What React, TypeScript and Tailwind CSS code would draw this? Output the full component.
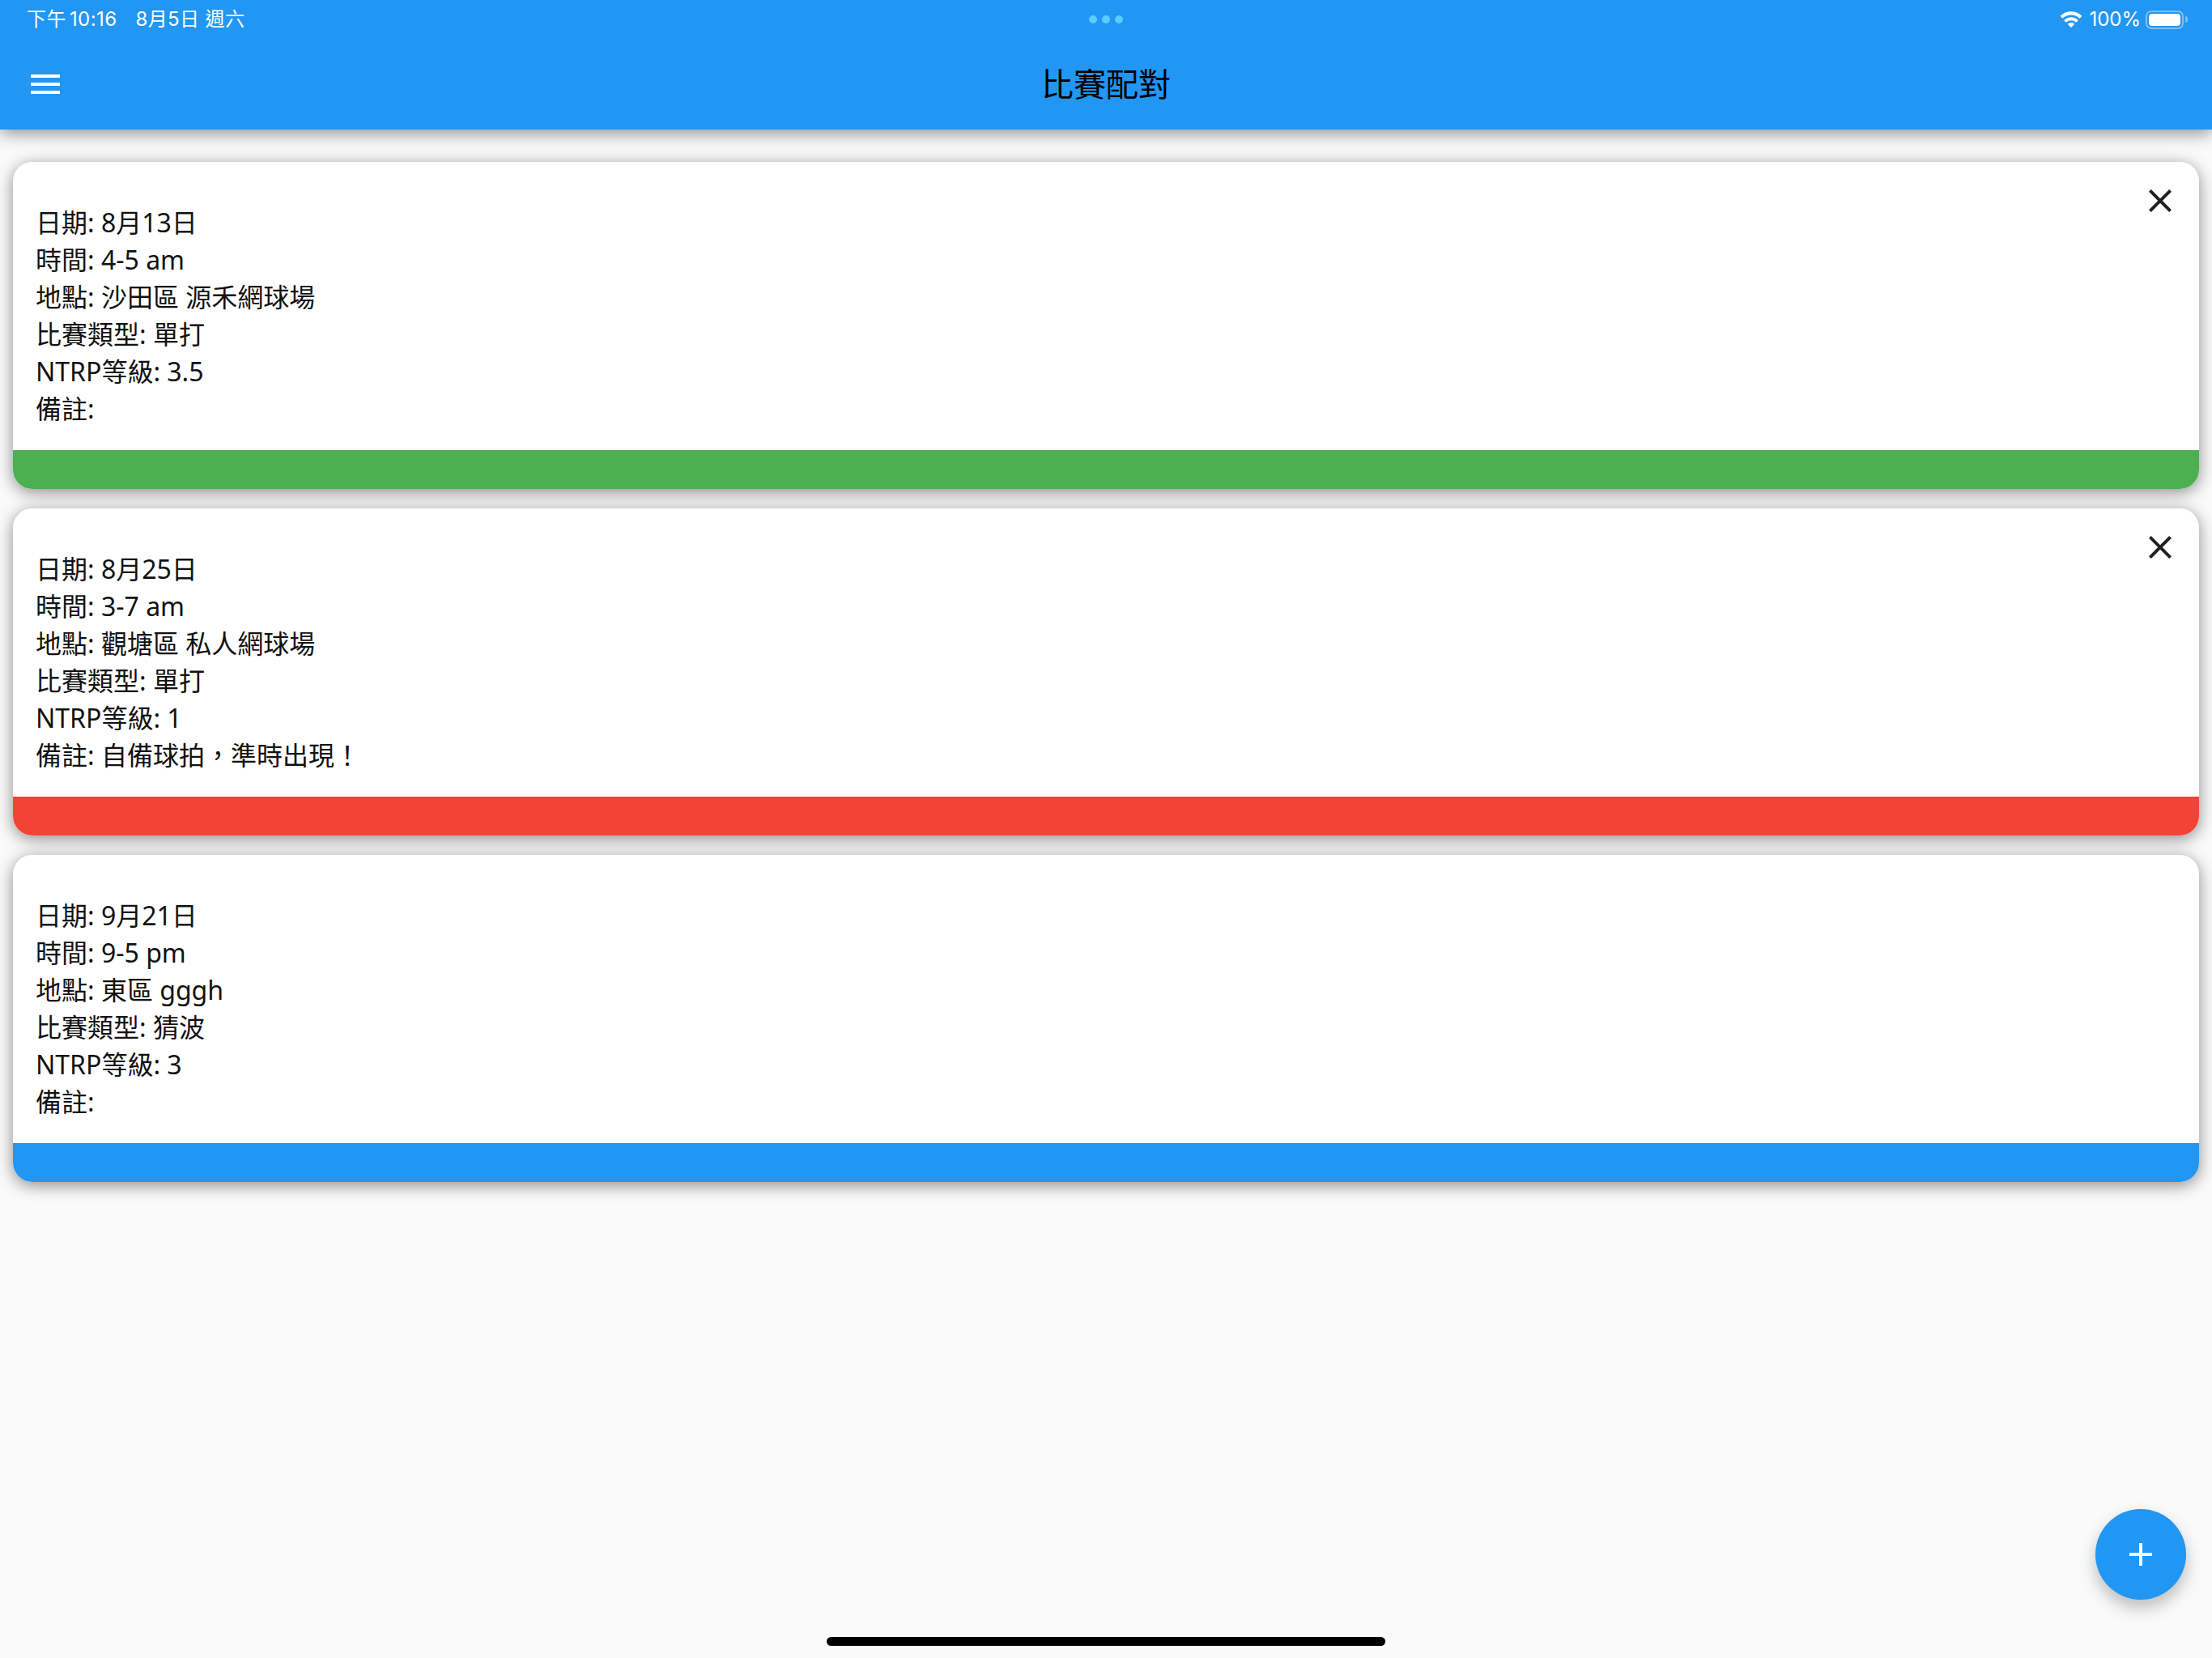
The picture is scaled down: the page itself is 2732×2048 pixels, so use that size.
const FONT = "font-['Noto_Sans','Noto_Sans_CJK_TC',sans-serif]";

const matches = [
  {
    id: 1,
    lines: ["日期: 8月13日", "時間: 4-5 am", "地點: 沙田區 源禾網球場", "比賽類型: 單打", "NTRP等級: 3.5", "備註:"],
    bar: "bg-[#4CAF50]",
    closable: true,
  },
  {
    id: 2,
    lines: ["日期: 8月25日", "時間: 3-7 am", "地點: 觀塘區 私人網球場", "比賽類型: 單打", "NTRP等級: 1", "備註: 自備球拍，準時出現！"],
    bar: "bg-[#F44336]",
    closable: true,
  },
  {
    id: 3,
    lines: ["日期: 9月21日", "時間: 9-5 pm", "地點: 東區 gggh", "比賽類型: 猜波", "NTRP等級: 3", "備註:"],
    bar: "bg-[#2196F3]",
    closable: false,
  },
];

const MatchCard = ({ lines, bar, closable }: { lines: string[]; bar: string; closable: boolean }) => (
  <div className="relative h-[404px] flex flex-col rounded-[24px] bg-white overflow-hidden">
    <div className="flex-1 pt-[52px] px-7 pb-7">
      {lines.map((line) => (
        <p key={line} className="text-[32px] leading-[46px] text-[#111111] whitespace-pre">
          {line}
        </p>
      ))}
    </div>
    <div className={`h-12 ${bar}`} />
    {closable && (
      <svg viewBox="0 0 24 24" className="absolute top-6 right-6 w-12 h-12 fill-[#212121]">
        <path d="M19 6.41 17.59 5 12 10.59 6.41 5 5 6.41 10.59 12 5 17.59 6.41 19 12 13.41 17.59 19 19 17.59 13.41 12z" />
      </svg>
    )}
  </div>
);

const App = () => {
  return (
    <div className={`relative w-[2732px] h-[2048px] overflow-hidden bg-[#FAFAFA] ${FONT}`}>
      <header className="relative z-10 h-40 bg-[#2196F3] shadow-[0_4px_20px_rgba(0,0,0,0.45)]">
        <div className="relative h-12 flex items-center justify-between pl-[33px] pr-[30px] text-white font-['Inter','Noto_Sans_CJK_TC',sans-serif] text-[24px]">
          <div className="flex gap-[23px] tracking-[0.4px]">
            <span className="[word-spacing:-3px]">下午 10:16</span>
            <span>8月5日 週六</span>
          </div>
          <div className="absolute left-[1345px] top-[19px] flex gap-[6px]">
            <span className="w-[10px] h-[10px] rounded-full bg-[#5CCBFF]" />
            <span className="w-[10px] h-[10px] rounded-full bg-[#5CCBFF]" />
            <span className="w-[10px] h-[10px] rounded-full bg-[#5CCBFF]" />
          </div>
          <div className="flex items-center gap-[8px]">
            <svg viewBox="1.4 0 25.2 19" className="w-[28px] h-[20px] fill-white">
              <path d="M14 4.2c3.7 0 7.1 1.4 9.7 3.8.2.2.5.2.7 0l2-2c.2-.2.2-.6 0-.8C23.100 2 18.700.2 14 .2S4.900 2 1.600 5.200c-.2.2-.2.6 0 .8l2 2c.2.2.5.2.7 0C6.900 5.600 10.300 4.200 14 4.200zM14 10.800c2 0 3.900.8 5.400 2.100.2.2.5.2.7 0l2-2c.2-.2.2-.6 0-.8C19.900 8 17 6.800 14 6.800S8.100 8 5.900 10.100c-.2.2-.2.6 0 .8l2 2c.2.2.5.2.7 0C10.100 11.600 12 10.800 14 10.800zM17.700 15.500c.2-.2.2-.5 0-.7C16.700 13.900 15.400 13.400 14 13.400s-2.700.5-3.700 1.400c-.2.2-.2.5 0 .7l3.300 3.300c.2.2.6.2.8 0z" />
            </svg>
            <span>100%</span>
            <div className="flex items-center ml-[-2px]">
              <div className="w-[47px] h-[23px] rounded-[7px] border-2 border-white/40 p-[2px]">
                <div className="w-full h-full rounded-[4px] bg-white" />
              </div>
              <div className="ml-[2px] w-[3px] h-[8px] rounded-r-full bg-white/40" />
            </div>
          </div>
        </div>
        <div className="relative h-[112px] flex items-center pl-8">
          <svg viewBox="0 0 24 24" className="w-12 h-12 fill-white">
            <path d="M3 18h18v-2H3v2zm0-5h18v-2H3v2zm0-7v2h18V6H3z" />
          </svg>
          <h1 className="absolute inset-x-0 text-center text-[40px] leading-[112px] text-black">比賽配對</h1>
        </div>
      </header>

      <main className="flex flex-col gap-6 px-4 pt-10">
        {matches.map((m) => (
          <div key={m.id} className="rounded-[24px] shadow-[0_4px_20px_rgba(0,0,0,0.45)]">
            <MatchCard lines={m.lines} bar={m.bar} closable={m.closable} />
          </div>
        ))}
      </main>

      <button className="absolute right-8 bottom-[72px] w-28 h-28 rounded-full bg-[#2196F3] flex items-center justify-center shadow-[0_10px_20px_rgba(0,0,0,0.25)]">
        <svg viewBox="0 0 24 24" className="w-12 h-12 fill-white">
          <path d="M19 13h-6v6h-2v-6H5v-2h6V5h2v6h6v2z" />
        </svg>
      </button>

      <div className="absolute left-[1021px] bottom-[15px] w-[690px] h-[11px] rounded-full bg-black" />
    </div>
  );
};

export default App;
